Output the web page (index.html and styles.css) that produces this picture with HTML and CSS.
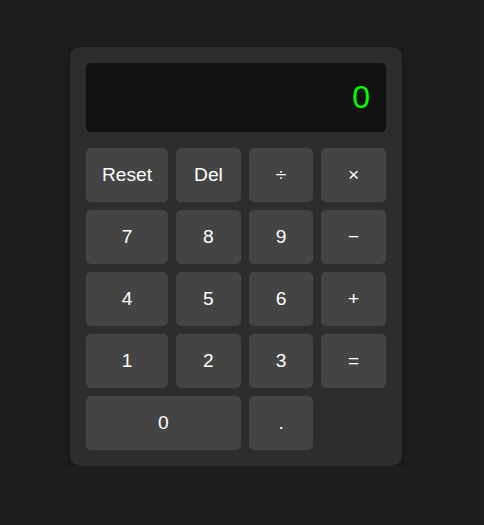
FILE: index.html
```html
<!DOCTYPE html>
<html lang="en">
<head>
<meta charset="utf-8">
<title>Calculator</title>
<link rel="stylesheet" href="styles.css">
</head>
<body>
<div class="calculator">
  <div class="display">0</div>
  <div class="keys">
    <button class="key">Reset</button>
    <button class="key">Del</button>
    <button class="key">÷</button>
    <button class="key">×</button>
    <button class="key">7</button>
    <button class="key">8</button>
    <button class="key">9</button>
    <button class="key">−</button>
    <button class="key">4</button>
    <button class="key">5</button>
    <button class="key">6</button>
    <button class="key">+</button>
    <button class="key">1</button>
    <button class="key">2</button>
    <button class="key">3</button>
    <button class="key">=</button>
    <button class="key key-wide">0</button>
    <button class="key">.</button>
  </div>
</div>
</body>
</html>
```
FILE: styles.css
```css
html, body {
  margin: 0;
  background: #1e1e1e;
  font-family: "Liberation Sans", Arial, sans-serif;
}
body {
  padding: 47px 0 0 70px;
}
.calculator {
  width: 300px;
  padding: 16px;
  background: #2d2d2d;
  border-radius: 10px;
  box-shadow: 0 4px 12px rgba(0, 0, 0, 0.4);
}
.display {
  background: #121212;
  color: #00ff00;
  font-size: 32px;
  text-align: right;
  padding: 16px;
  border-radius: 5px;
  margin-bottom: 16px;
}
.keys {
  display: grid;
  grid-template-columns: repeat(4, 1fr);
  gap: 8px;
}
.key {
  font-family: inherit;
  font-size: 19.2px;
  padding: 16px;
  background: #444444;
  color: #ffffff;
  border: none;
  border-radius: 5px;
  line-height: normal;
}
.key-wide {
  grid-column: span 2;
}
```
